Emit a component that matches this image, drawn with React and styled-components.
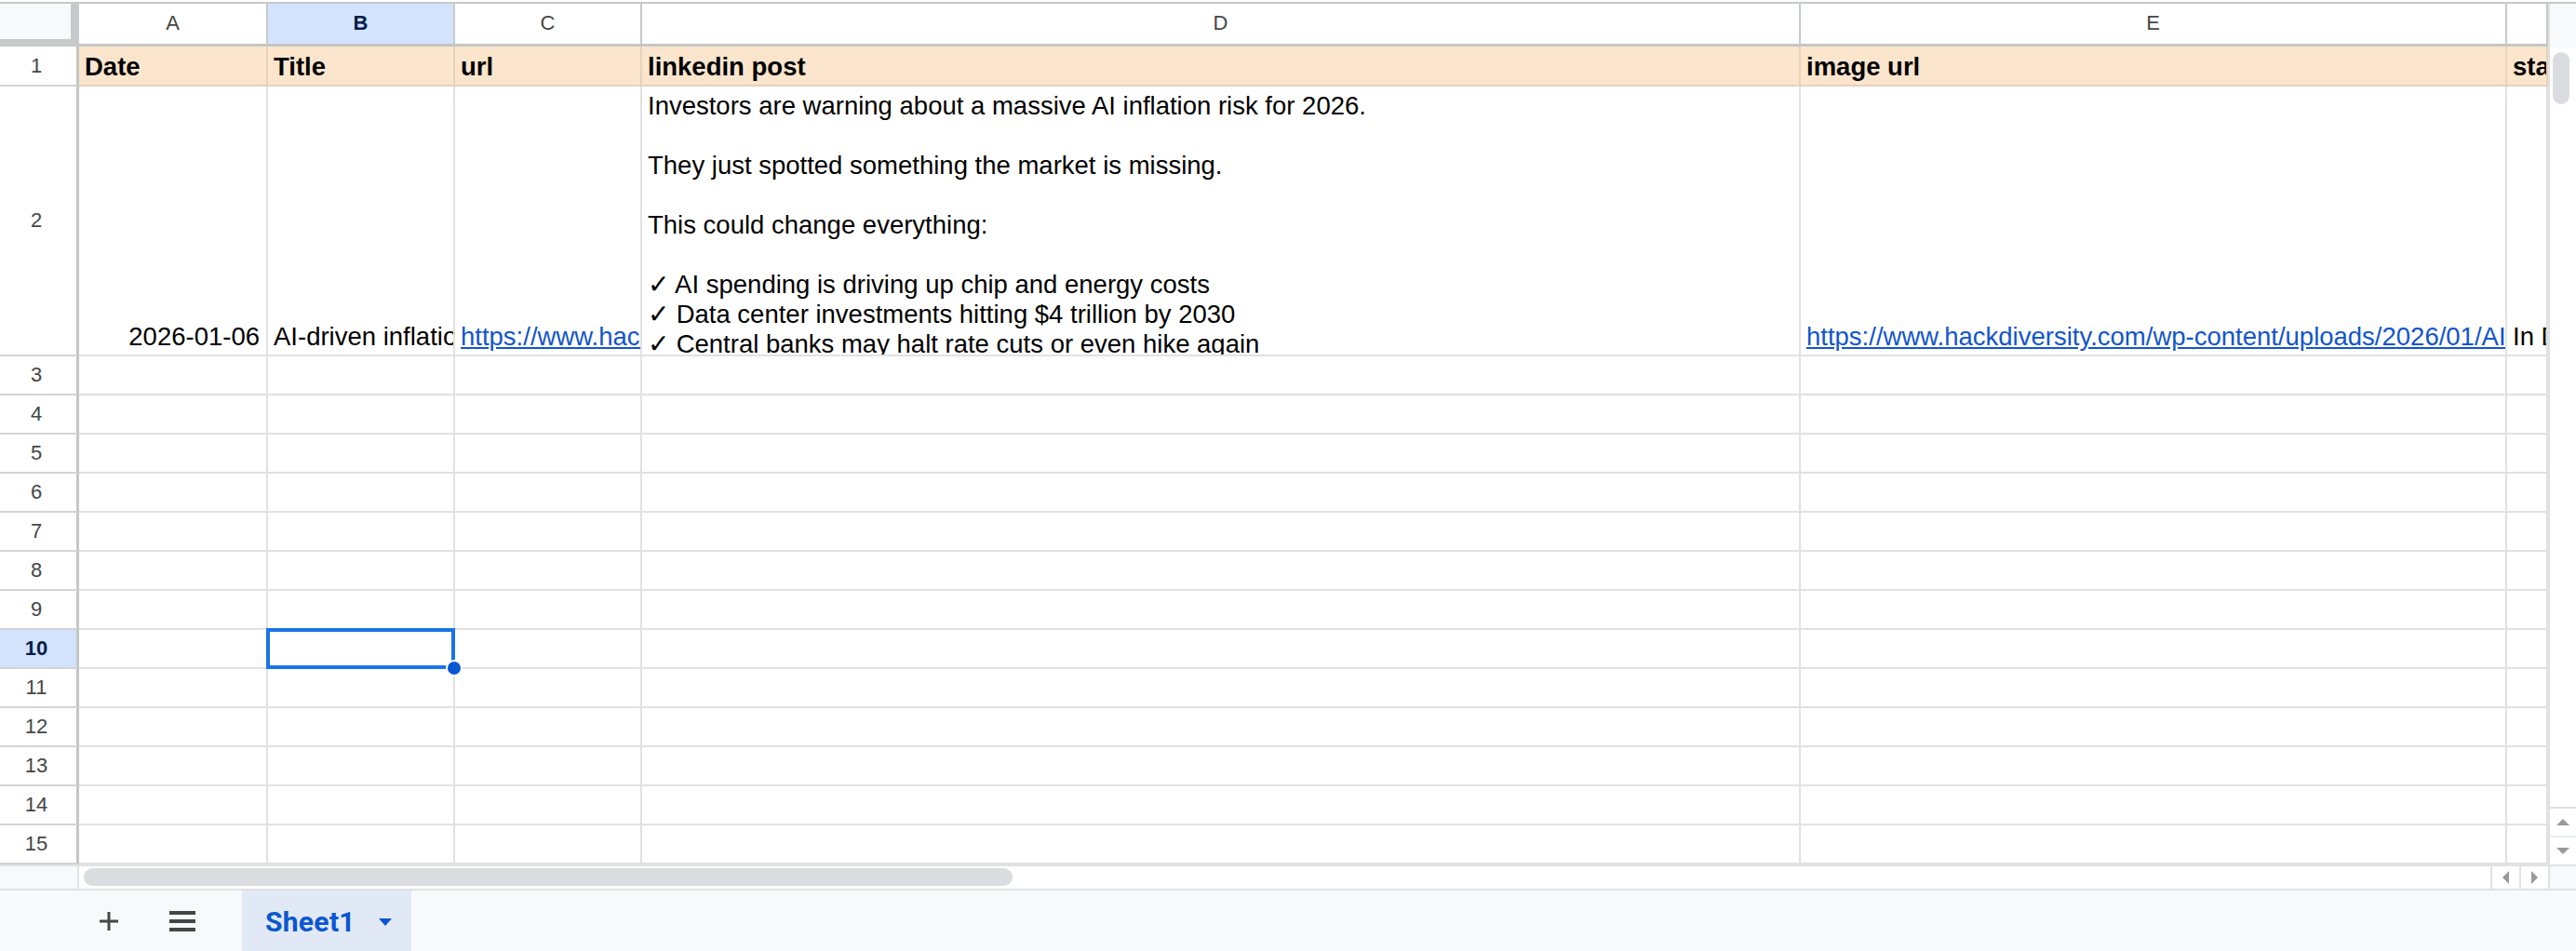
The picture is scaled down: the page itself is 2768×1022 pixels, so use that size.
import React from "react";
import styled, { createGlobalStyle } from "styled-components";

const GlobalStyle = createGlobalStyle`
  * { box-sizing: border-box; }
  html, body { margin: 0; padding: 0; background: #fff; }
  body { font-family: "Liberation Sans", Arial, sans-serif; }
`;

const ROW_HEAD = 85;
const COLS = [
  { id: "A", width: 203 },
  { id: "B", width: 201 },
  { id: "C", width: 201 },
  { id: "D", width: 1245 },
  { id: "E", width: 759 },
  { id: "F", width: 44 },
];
const SELECTED = { col: "B", row: 10 };

const POST = `Investors are warning about a massive AI inflation risk for 2026.

They just spotted something the market is missing.

This could change everything:

✓ AI spending is driving up chip and energy costs
✓ Data center investments hitting $4 trillion by 2030
✓ Central banks may halt rate cuts or even hike again
✓ Tech stocks could see a major repricing`;

const HEADERS = ["Date", "Title", "url", "linkedin post", "image url", "status"];

const ROW2 = [
  { value: "2026-01-06", align: "right" },
  { value: "AI-driven inflation could be the biggest market risk of 2026" },
  { value: "https://www.hackdiversity.com/ai-driven-inflation-risk-2026/", link: true },
  { value: POST, wrap: true },
  { value: "https://www.hackdiversity.com/wp-content/uploads/2026/01/AI-driven-inflation.png", link: true },
  { value: "In Draft" },
];

const EMPTY_ROWS = Array.from({ length: 13 }, (_, i) => i + 3);

const App = () => {
  return (
    <>
      <GlobalStyle />
      <Page>
        <Workspace>
          <Grid>
            <Corner />
            {COLS.map((c) => (
              <ColHead key={c.id} $active={c.id === SELECTED.col}>
                {c.width > 60 ? c.id : ""}
              </ColHead>
            ))}

            <RowHead>1</RowHead>
            {HEADERS.map((h) => (
              <Cell key={h} $header>
                {h}
              </Cell>
            ))}

            <RowHead>2</RowHead>
            {ROW2.map((c, i) => (
              <Cell key={i} $align={c.align} $wrap={c.wrap}>
                {c.link ? <Link href="#">{c.value}</Link> : c.value}
              </Cell>
            ))}

            {EMPTY_ROWS.map((r) => (
              <React.Fragment key={r}>
                <RowHead $active={r === SELECTED.row}>{r}</RowHead>
                {COLS.map((c) => (
                  <Cell key={c.id} $selected={r === SELECTED.row && c.id === SELECTED.col} />
                ))}
              </React.Fragment>
            ))}
          </Grid>

          <VScroll>
            <VTrack>
              <VThumb />
            </VTrack>
            <ArrowButton $dir="up">
              <Tri $dir="up" />
            </ArrowButton>
            <ArrowButton $dir="down">
              <Tri $dir="down" />
            </ArrowButton>
          </VScroll>
        </Workspace>

        <HScroll>
          <HStub />
          <HTrack>
            <HThumb />
          </HTrack>
          <HArrow>
            <Tri $dir="left" />
          </HArrow>
          <HArrow>
            <Tri $dir="right" />
          </HArrow>
          <HCorner />
        </HScroll>

        <Footer>
          <IconButton aria-label="Add sheet" $gap={39}>
            <svg width="24" height="24" viewBox="0 0 24 24">
              <path d="M12 2v20M2 12h20" stroke="#444746" strokeWidth="3" fill="none" />
            </svg>
          </IconButton>
          <IconButton aria-label="All sheets" $gap={44}>
            <svg width="30" height="24" viewBox="0 0 30 24">
              <path d="M1 3h28M1 12h28M1 21h28" stroke="#444746" strokeWidth="4" fill="none" />
            </svg>
          </IconButton>
          <SheetTab>
            Sheet1
            <svg width="16" height="10" viewBox="0 0 16 10">
              <path d="M1 1h14L8 9z" fill="#0b57d0" />
            </svg>
          </SheetTab>
        </Footer>
      </Page>
    </>
  );
};

const Page = styled.div`
  width: 2768px;
  height: 1022px;
  padding-top: 2px;
  display: flex;
  flex-direction: column;
  background: #fff;
  overflow: hidden;
`;

const Workspace = styled.div`
  display: flex;
  height: 927px;
  border-top: 2px solid #c7c9c9;
`;

const Grid = styled.div`
  display: grid;
  grid-template-columns: ${ROW_HEAD}px ${COLS.map((c) => `${c.width}px`).join(" ")};
  grid-template-rows: 46px 43px 290px repeat(13, 42px);
  width: 2738px;
  overflow: hidden;
`;

const Corner = styled.div`
  background: #f8f9fa;
  border-right: 9px solid #c8c9ca;
  border-bottom: 8px solid #c8c9ca;
`;

const ColHead = styled.div`
  display: flex;
  align-items: center;
  justify-content: center;
  padding-bottom: 2px;
  font-size: 22px;
  color: ${(p) => (p.$active ? "#041e49" : "#444746")};
  font-weight: ${(p) => (p.$active ? 700 : 400)};
  background: ${(p) => (p.$active ? "#d3e3fd" : "#fff")};
  border-right: 2px solid #c7c9c9;
  border-bottom: 3px solid #c4c7c5;
`;

const RowHead = styled.div`
  display: flex;
  align-items: center;
  justify-content: center;
  padding-right: 4px;
  font-size: 22px;
  color: ${(p) => (p.$active ? "#041e49" : "#444746")};
  font-weight: ${(p) => (p.$active ? 700 : 400)};
  background: ${(p) => (p.$active ? "#d3e3fd" : "#fff")};
  border-right: 3px solid #c4c7c5;
  border-bottom: 2px solid #d3d4d4;
`;

const Cell = styled.div`
  position: relative;
  display: flex;
  align-items: ${(p) => (p.$wrap ? "flex-start" : "flex-end")};
  justify-content: ${(p) => (p.$align === "right" ? "flex-end" : "flex-start")};
  padding: ${(p) => (p.$wrap ? "5px 6px 0" : p.$align === "right" ? "0 7px 3px 6px" : "0 5px 3px 6px")};
  font-size: 27.5px;
  line-height: 32px;
  color: #000;
  font-weight: ${(p) => (p.$header ? 700 : 400)};
  background: ${(p) => (p.$header ? "#fce5cd" : "#fff")};
  border-right: 2px solid ${(p) => (p.$header ? "#e6d1bb" : "#e1e1e1")};
  border-bottom: 2px solid ${(p) => (p.$header ? "#e6d1bb" : "#e1e1e1")};
  white-space: ${(p) => (p.$wrap ? "pre-wrap" : "nowrap")};
  overflow: ${(p) => (p.$selected ? "visible" : "hidden")};
  z-index: ${(p) => (p.$selected ? 2 : "auto")};

  ${(p) =>
    p.$selected &&
    `
    &::before {
      content: "";
      position: absolute;
      left: -2px;
      top: -2px;
      right: -2px;
      bottom: -2px;
      border: 4px solid #1a73e8;
    }
    &::after {
      content: "";
      position: absolute;
      right: -10px;
      bottom: -10px;
      width: 14px;
      height: 14px;
      border-radius: 50%;
      background: #0b57d0;
      border: 2px solid #fff;
    }
  `}
`;

const Link = styled.a`
  color: #1155cc;
  text-decoration: underline;
`;

const VScroll = styled.div`
  width: 30px;
  display: flex;
  flex-direction: column;
  border-left: 2px solid #e1e1e1;
  background: #fff;
`;

const VTrack = styled.div`
  flex: 1;
  padding: 52px 5px 0 3px;
  background: linear-gradient(#f8f9fa 0 48px, #fff 48px);
`;

const VThumb = styled.div`
  width: 18px;
  height: 56px;
  border-radius: 9px;
  background: #dadce0;
`;

const ArrowButton = styled.div`
  height: 31px;
  display: flex;
  align-items: center;
  justify-content: center;
  border-top: 2px solid ${(p) => (p.$dir === "down" ? "#e8eef8" : "#e1e1e1")};
`;

const Tri = styled.span`
  width: 0;
  height: 0;
  border: 7px solid transparent;
  ${(p) => p.$dir === "up" && "border-bottom-color: #999; border-top-width: 0;"}
  ${(p) => p.$dir === "down" && "border-top-color: #999; border-bottom-width: 0;"}
  ${(p) => p.$dir === "left" && "border-right-color: #999; border-left-width: 0;"}
  ${(p) => p.$dir === "right" && "border-left-color: #999; border-right-width: 0;"}
`;

const HScroll = styled.div`
  display: flex;
  height: 28px;
  border-top: 2px solid #e1e1e1;
  border-bottom: 2px solid #e1e1e1;
`;

const HStub = styled.div`
  width: ${ROW_HEAD}px;
  background: #f8f9fa;
  border-right: 2px solid #e1e1e1;
`;

const HTrack = styled.div`
  flex: 1;
  padding: 2px 0 0 5px;
  background: #fff;
`;

const HThumb = styled.div`
  width: 998px;
  height: 19px;
  border-radius: 10px;
  background: #dadce0;
`;

const HArrow = styled.div`
  width: 31px;
  display: flex;
  align-items: center;
  justify-content: center;
  border-left: 2px solid #e1e1e1;
`;

const HCorner = styled.div`
  width: 30px;
  background: #f8f9fa;
  border-left: 2px solid #e1e1e1;
`;

const Footer = styled.div`
  flex: 1;
  display: flex;
  align-items: stretch;
  padding-left: 97px;
  background: #f8f9fa;
`;

const IconButton = styled.div`
  width: 40px;
  display: flex;
  align-items: center;
  justify-content: center;
  margin-right: ${(p) => p.$gap}px;
`;

const SheetTab = styled.div`
  display: flex;
  align-items: center;
  gap: 24px;
  width: 182px;
  padding: 2px 0 0 25px;
  background: #e1e9f7;
  color: #0b57d0;
  font-family: Roboto, "Liberation Sans", Arial, sans-serif;
  font-weight: 700;
  font-size: 30px;
  letter-spacing: 0.3px;
`;

export default App;
